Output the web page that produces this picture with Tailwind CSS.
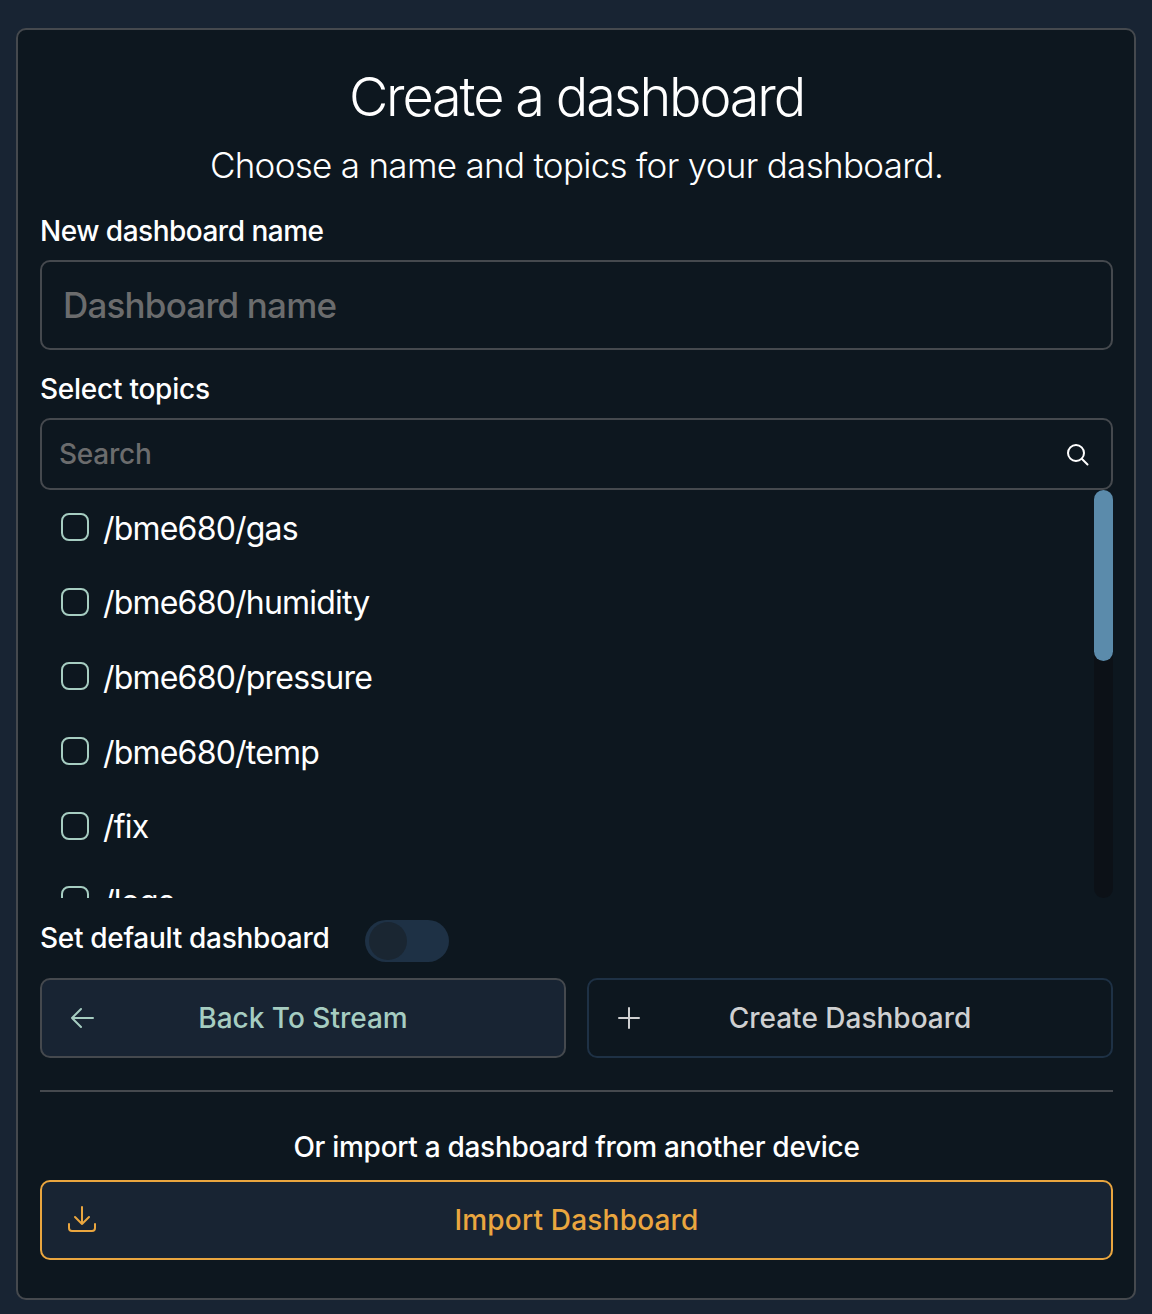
<!DOCTYPE html>
<html lang="en">
<head>
    <meta charset="UTF-8">
    <meta name="viewport" content="width=device-width, initial-scale=1.0">
    <title>Create a dashboard</title>
    <script src="https://cdn.jsdelivr.net/npm/@tailwindcss/browser@4"></script>
</head>
<body class="bg-[#182433] h-[1314px] font-['Inter',sans-serif] text-white overflow-hidden">
    <div class="px-4 pt-7">
        <div class="h-[1272px] bg-[#0d171f] border-2 border-[#45494e] rounded-[10px] pl-[22px] pr-[21px]">
            <h1 class="text-[54px] leading-[64px] font-light text-center tracking-[-2.15px] mt-[35px]">Create a dashboard</h1>
            <p class="text-[35px] leading-[44px] font-[350] text-center tracking-[-0.7px] mt-[14px]">Choose a name and topics for your dashboard.</p>

            <label class="block text-[28px] leading-[34px] font-[450] tracking-[-0.5px] mt-[27px]">New dashboard name</label>
            <div class="h-[90px] mt-[12px] border-2 border-[#45494e] rounded-[10px] flex items-center px-[21px] text-[35px] font-[450] tracking-[-0.8px] text-[#6b6c6d]">Dashboard name</div>

            <label class="block text-[28px] leading-[34px] font-[450] tracking-[-0.25px] mt-[22px]">Select topics</label>
            <div class="h-[72px] mt-[12px] border-2 border-[#45494e] rounded-[10px] flex items-center justify-between pl-[17px] pr-[22px] text-[28px] font-[450] tracking-[-0.25px] text-[#6b6c6d]">
                <span>Search</span>
                <svg class="w-6 h-6" viewBox="0 0 24 24" fill="none" stroke="#fff" stroke-width="2" stroke-linecap="round"><circle cx="11" cy="11" r="8"/><path d="M17 17l5.5 5.5"/></svg>
            </div>

            <div class="relative h-[408px] overflow-hidden">
                <div class="flex flex-col pl-[21px] text-[32px] leading-[40px] tracking-[-0.8px] pt-[18.5px] gap-[34.7px]">
                    <div class="flex items-center gap-[14px]"><span class="w-7 h-7 mb-[3px] rounded-[8px] border-2 border-[#a6cdc1]"></span><span>/bme680/gas</span></div>
                    <div class="flex items-center gap-[14px]"><span class="w-7 h-7 mb-[3px] rounded-[8px] border-2 border-[#a6cdc1]"></span><span>/bme680/humidity</span></div>
                    <div class="flex items-center gap-[14px]"><span class="w-7 h-7 mb-[3px] rounded-[8px] border-2 border-[#a6cdc1]"></span><span>/bme680/pressure</span></div>
                    <div class="flex items-center gap-[14px]"><span class="w-7 h-7 mb-[3px] rounded-[8px] border-2 border-[#a6cdc1]"></span><span>/bme680/temp</span></div>
                    <div class="flex items-center gap-[14px]"><span class="w-7 h-7 mb-[3px] rounded-[8px] border-2 border-[#a6cdc1]"></span><span>/fix</span></div>
                    <div class="flex items-center gap-[14px]"><span class="w-7 h-7 mb-[3px] rounded-[8px] border-2 border-[#a6cdc1]"></span><span>/logs</span></div>
                </div>
                <div class="absolute right-0 top-0 bottom-0 w-[19px] rounded-[10px] bg-[#0c1117]">
                    <div class="h-[171px] rounded-[10px] bg-[#5b8bab]"></div>
                </div>
            </div>

            <div class="flex items-center mt-[22px] h-[42px]">
                <span class="text-[28px] leading-[34px] font-[450] tracking-[-0.3px] -mt-[6px]">Set default dashboard</span>
                <span class="ml-[36px] w-[84px] h-[42px] rounded-full bg-[#1e3145] flex items-center px-[4px]">
                    <span class="w-[38px] h-[38px] rounded-full bg-[#1a2632]"></span>
                </span>
            </div>

            <div class="grid grid-cols-2 gap-[21px] mt-[16px]">
                <button class="h-20 grid grid-cols-[1fr_auto_1fr] items-center px-[28px] bg-[#182433] border-2 border-[#45494e] rounded-[10px] text-[28px] font-medium text-[#a6cdc1]">
                    <svg class="w-6 h-6" viewBox="0 0 24 24" fill="none" stroke="#a6cdc1" stroke-width="2" stroke-linecap="round" stroke-linejoin="round"><path d="M23 12H2M11 3l-9 9 9 9"/></svg>
                    <span>Back To Stream</span>
                </button>
                <button class="h-20 grid grid-cols-[1fr_auto_1fr] items-center px-[28px] border-2 border-[#1e3145] rounded-[10px] text-[28px] font-medium text-[#cfd0d1]">
                    <svg class="w-6 h-6" viewBox="0 0 24 24" fill="none" stroke="#cfd0d1" stroke-width="2" stroke-linecap="round"><path d="M12 2v20M2 12h20"/></svg>
                    <span>Create Dashboard</span>
                </button>
            </div>

            <div class="h-[2px] bg-[#45494e] mt-[32px]"></div>

            <p class="text-[28px] leading-[34px] font-[450] tracking-[-0.29px] text-center mt-[38px]">Or import a dashboard from another device</p>

            <button class="w-full h-20 mt-[16px] grid grid-cols-[1fr_auto_1fr] items-center px-[25px] bg-[#182433] border-2 border-[#eaa63f] rounded-[10px] text-[28px] font-medium tracking-[0.2px] text-[#eaa63f]">
                <svg class="w-[30px] h-[30px]" viewBox="0 0 30 30" fill="none" stroke="#eaa63f" stroke-width="2" stroke-linecap="round" stroke-linejoin="round"><path d="M15 2v17M8 12l7 7 7-7M2 19v4a3 3 0 0 0 3 3h20a3 3 0 0 0 3-3v-4"/></svg>
                <span>Import Dashboard</span>
            </button>
        </div>
    </div>
</body>
</html>
